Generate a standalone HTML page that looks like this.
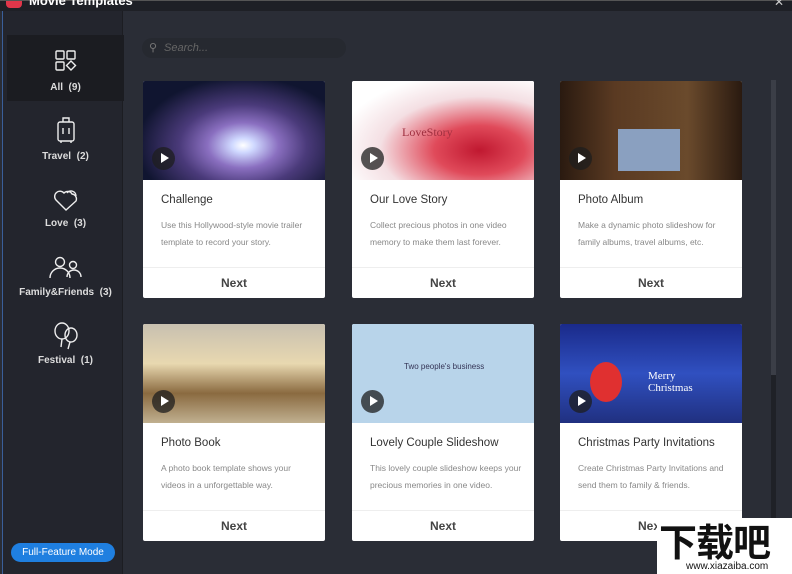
<!DOCTYPE html>
<html><head><style>
*{margin:0;padding:0;box-sizing:border-box}
body{width:792px;height:574px;overflow:hidden;background:#2a2d36;font-family:"Liberation Sans",sans-serif;position:relative}
.top{position:absolute;left:0;top:0;width:792px;height:11px;background:#1e2026;border-top:1px solid #555}
.top span{position:absolute;left:29px;top:-8px;color:#fff;font-weight:bold;font-size:13px}
.logo{position:absolute;left:6px;top:0;width:16px;height:7px;background:#e0364a;border-radius:0 0 4px 4px}
.side{position:absolute;left:2px;top:11px;width:121px;height:563px;background:#23252d;border-left:1px solid #3a5f9a;border-right:1px solid #1c1d22}
.item{position:absolute;left:4px;width:117px;text-align:center;color:#ddd;font-size:10px;font-weight:bold}
.item.sel{background:#1b1c21}
.item svg{display:block;margin:0 auto}
.btn{position:absolute;left:11px;top:543px;width:104px;height:19px;border-radius:10px;background:#1f7fe0;color:#fff;font-size:10px;text-align:center;line-height:19px}
.search{position:absolute;left:142px;top:38px;width:204px;height:20px;border-radius:10px;background:#262930;color:#666;font-size:11px;font-style:italic;line-height:20px;padding-left:22px}
.card{position:absolute;width:182px;height:217px;background:#fff;border-radius:2px;overflow:hidden}
.img{height:99px;position:relative}
.play{position:absolute;left:9px;top:66px;width:23px;height:23px;border-radius:50%;background:rgba(30,30,30,.75)}
.play:after{content:"";position:absolute;left:9px;top:6px;border-left:8px solid #fff;border-top:5.5px solid transparent;border-bottom:5.5px solid transparent}
.t{position:absolute;left:18px;top:113px;font-size:11.5px;color:#333}
.d{position:absolute;left:18px;top:136px;width:152px;font-size:8.5px;color:#888;line-height:17px}
.n{position:absolute;left:0;top:186px;width:182px;height:31px;border-top:1px solid #eee;text-align:center;font-weight:bold;font-size:12px;color:#444;line-height:31px}
.scroll{position:absolute;left:771px;top:80px;width:5px;height:470px;background:#1f2127}
.scroll div{width:5px;height:295px;background:#3b3e47}
.wm{position:absolute;left:657px;top:518px;width:135px;height:56px;background:#fff;overflow:hidden}
.wm b{position:absolute;left:2px;top:-6px;font-size:38px;font-family:"Noto Sans CJK SC",sans-serif;color:#111;letter-spacing:-1px}
.wm i{position:absolute;left:27px;top:43px;font-size:10px;font-style:normal;color:#111;background:#fff;padding:0 2px}
</style></head><body>
<div class="top"><div class="logo"></div><span>Movie Templates</span></div>
<div style="position:absolute;right:8px;top:-5px;color:#ccc;font-size:12px">✕</div>
<div class="side">
<div class="item sel" style="top:24px;height:66px;padding-top:14px">
<svg width="24" height="24" viewBox="0 0 24 24" fill="none" stroke="#eee" stroke-width="1.4"><rect x="2" y="2" width="8" height="8" rx="1"/><rect x="13" y="2" width="8" height="8" rx="1"/><rect x="2" y="13" width="8" height="8" rx="1"/><path d="M17 12l4.5 4.5L17 21l-4.5-4.5z"/></svg><div style="margin-top:9px">All &nbsp;(9)</div></div>
<div class="item" style="top:104px">
<svg width="24" height="30" viewBox="0 0 24 30" fill="none" stroke="#eee" stroke-width="1.4"><rect x="4" y="7" width="16" height="19" rx="2"/><path d="M9 7V3h6v4M9 13v6M15 13v6M7 26v2M17 26v2"/></svg><div style="margin-top:6px">Travel &nbsp;(2)</div></div>
<div class="item" style="top:175px">
<svg width="28" height="26" viewBox="0 0 28 26" fill="none" stroke="#eee" stroke-width="1.4"><path d="M14 24L4 14a5 5 0 0 1 8-7 5 5 0 0 1 8 1 5 5 0 0 1 4 7z"/><path d="M15 7a5 5 0 0 1 9 3"/></svg><div style="margin-top:6px">Love &nbsp;(3)</div></div>
<div class="item" style="top:244px">
<svg width="36" height="26" viewBox="0 0 36 26" fill="none" stroke="#eee" stroke-width="1.4"><circle cx="12" cy="7" r="4.5"/><circle cx="25" cy="10" r="3.5"/><path d="M2 23a10 10 0 0 1 20 0M19 22a7 7 0 0 1 14 0"/></svg><div style="margin-top:6px">Family&amp;Friends &nbsp;(3)</div></div>
<div class="item" style="top:310px">
<svg width="28" height="30" viewBox="0 0 28 30" fill="none" stroke="#eee" stroke-width="1.4"><ellipse cx="10" cy="10" rx="7" ry="8"/><ellipse cx="19" cy="14" rx="6" ry="7"/><path d="M10 18l-1 8M18 21l-2 7"/></svg><div style="margin-top:4px">Festival &nbsp;(1)</div></div>
</div>
<div class="btn">Full-Feature Mode</div>
<div class="search"><span style="position:absolute;left:7px;top:0;font-style:normal;color:#777">⚲</span>Search...</div>

<div class="card" style="left:143px;top:81px"><div class="img" style="background:radial-gradient(ellipse at 55% 65%,#fff 0,#cfd8ff 8%,#8a6fc0 25%,#4a3a7a 45%,#101530 75%)"><div class="play"></div></div><div class="t">Challenge</div><div class="d">Use this Hollywood-style movie trailer template to record your story.</div><div class="n">Next</div></div>
<div class="card" style="left:352px;top:81px"><div class="img" style="background:radial-gradient(ellipse at 70% 70%,#c01830 0,#e04a5a 25%,#f4dfe3 55%,#fff 80%)"><div style="position:absolute;left:50px;top:44px;color:#a03040;font-family:'Liberation Serif',serif;font-size:12px">LoveStory</div><div class="play"></div></div><div class="t">Our Love Story</div><div class="d">Collect precious photos in one video memory to make them last forever.</div><div class="n">Next</div></div>
<div class="card" style="left:560px;top:81px"><div class="img" style="background:linear-gradient(90deg,#2a1a10,#5a3a22 30%,#6a4a2c 70%,#2a1a10)"><div style="position:absolute;left:58px;top:48px;width:62px;height:42px;background:#8aa0c0"></div><div class="play"></div></div><div class="t">Photo Album</div><div class="d">Make a dynamic photo slideshow for family albums, travel albums, etc.</div><div class="n">Next</div></div>

<div class="card" style="left:143px;top:324px"><div class="img" style="background:linear-gradient(180deg,#c8c0b0,#e8d8b0 40%,#8a6a40 70%,#c0b090)"><div class="play"></div></div><div class="t">Photo Book</div><div class="d">A photo book template shows your videos in a unforgettable way.</div><div class="n">Next</div></div>
<div class="card" style="left:352px;top:324px"><div class="img" style="background:#b8d4ea"><div style="position:absolute;left:52px;top:38px;font-size:8px;color:#335">Two people's business</div><div class="play"></div></div><div class="t">Lovely Couple Slideshow</div><div class="d">This lovely couple slideshow keeps your precious memories in one video.</div><div class="n">Next</div></div>
<div class="card" style="left:560px;top:324px"><div class="img" style="background:linear-gradient(180deg,#1a2a8a,#3050c0 50%,#203080)"><div style="position:absolute;left:88px;top:46px;color:#fff;font-family:'Liberation Serif',serif;font-size:11px;line-height:12px">Merry<br>Christmas</div><div style="position:absolute;left:30px;top:38px;width:32px;height:40px;border-radius:50%;background:#e03030"></div><div class="play"></div></div><div class="t">Christmas Party Invitations</div><div class="d">Create Christmas Party Invitations and send them to family &amp; friends.</div><div class="n">Next</div></div>

<div class="scroll"><div></div></div>
<div class="wm"><b>下载吧</b><i>www.xiazaiba.com</i></div>
</body></html>
